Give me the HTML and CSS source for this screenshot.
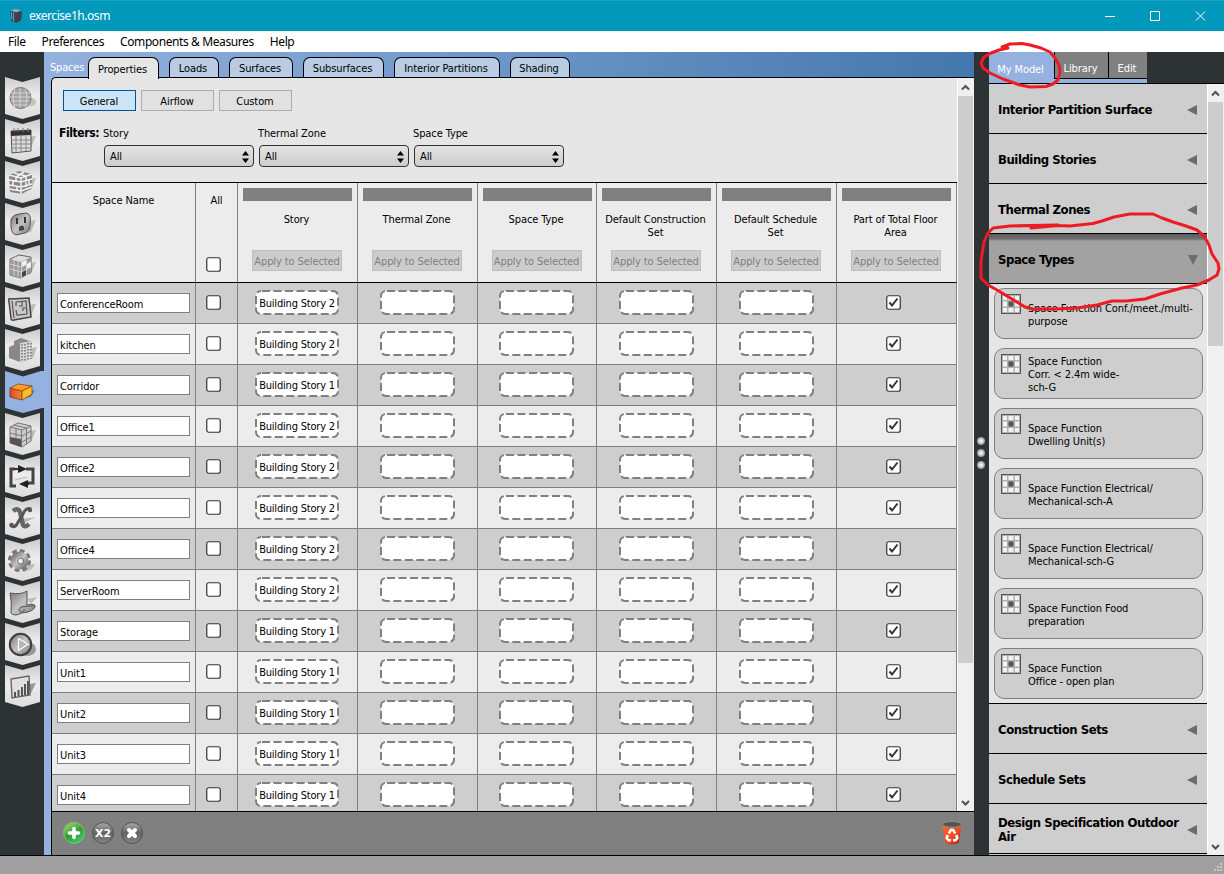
FILE: index.html
```html
<!DOCTYPE html>
<html lang="en">
<head>
<meta charset="utf-8">
<title>exercise1h.osm</title>
<link rel="stylesheet" href="styles.css">
</head>
<body>
<div class="window">
  <header class="titlebar">
    <svg class="app-icon" width="16" height="16" viewBox="0 0 16 16"><path d="M2 2.500 8 1 14 2.500 8 4.500z" fill="#8fa9bd"/><path d="M2 2.500 8 4.500V15L3 12.500z" fill="#2c4a63"/><path d="M14 2.500 8 4.500V15l5-2.500z" fill="#3d3f4c"/><path d="M3.500 4v7M5.500 5v8" stroke="#6d9cb8"/></svg>
    <span class="title">exercise1h.osm</span>
    <svg class="controls" width="110" height="20" viewBox="0 0 110 20" fill="none" stroke="#fff"><path d="M6 10.500h10M51.500 5.500h9v9h-9zM97 5.500l9 9M106 5.500l-9 9"/></svg>
  </header>
  <nav class="menubar"><span>File</span><span>Preferences</span><span>Components &amp; Measures</span><span>Help</span></nav>
  <div class="main">
    <aside class="sidebar" id="sidebar"></aside>
    <section class="workspace">
      <div class="tabs">
        <span class="tabs-label">Spaces</span>
        <span class="tab tab-on" style="width:71px">Properties</span>
        <span class="tab" style="width:50px">Loads</span>
        <span class="tab" style="width:64px">Surfaces</span>
        <span class="tab" style="width:81px">Subsurfaces</span>
        <span class="tab" style="width:106px">Interior Partitions</span>
        <span class="tab" style="width:60px">Shading</span>
      </div>
      <div class="panel">
        <div class="panel-body">
          <div class="content">
            <div class="filters">
              <div class="subtabs"><span class="subtab subtab-on">General</span><span class="subtab">Airflow</span><span class="subtab">Custom</span></div>
              <div class="filter-row">
                <b class="filter-title">Filters:</b>
                <div class="filter"><span>Story</span><div class="select">All<svg width="7" height="12" viewBox="0 0 7 12"><path d="M0 4.500 3.500 0 7 4.500zM0 7.500l3.500 4.500L7 7.500z"/></svg></div></div>
                <div class="filter"><span>Thermal Zone</span><div class="select">All<svg width="7" height="12" viewBox="0 0 7 12"><path d="M0 4.500 3.500 0 7 4.500zM0 7.500l3.500 4.500L7 7.500z"/></svg></div></div>
                <div class="filter"><span>Space Type</span><div class="select">All<svg width="7" height="12" viewBox="0 0 7 12"><path d="M0 4.500 3.500 0 7 4.500zM0 7.500l3.500 4.500L7 7.500z"/></svg></div></div>
              </div>
            </div>
            <div class="grid" id="grid"></div>
          </div>
          <div class="scrollbar">
            <svg class="arrow" width="17" height="17" viewBox="0 0 17 17"><path d="M5 10.500 8.500 7l3.500 3.500"/></svg>
            <div class="thumb" style="height:567px"></div>
            <svg class="arrow arrow-end" width="17" height="17" viewBox="0 0 17 17"><path d="M5 7l3.500 3.500L12 7"/></svg>
          </div>
        </div>
        <footer class="actions">
          <svg width="22" height="22" viewBox="0 0 22 22"><circle cx="11" cy="11" r="11" fill="url(#green)"/><circle cx="11" cy="11" r="10.300" fill="none" stroke="#75c37b"/><path d="M11 6.500v9M6.500 11h9" stroke="#fff" stroke-width="3.600" stroke-linecap="round"/></svg>
          <svg width="22" height="22" viewBox="0 0 22 22"><circle cx="11" cy="11" r="10.500" fill="url(#dark)" stroke="#505557"/><text x="11" y="15" class="x2" textLength="16" lengthAdjust="spacingAndGlyphs">X2</text></svg>
          <svg width="22" height="22" viewBox="0 0 22 22"><circle cx="11" cy="11" r="10.500" fill="url(#dark)" stroke="#505557"/><path d="M8 8l6 6M14 8l-6 6" stroke="#fff" stroke-width="4" stroke-linecap="round"/></svg>
          <svg class="trash" width="20" height="24" viewBox="0 0 20 24"><path d="M.5 3.500 3 21q1 2.500 7 2.500t7-2.500l2.500-17.500z" fill="url(#red)"/><ellipse cx="10" cy="3.400" rx="9.500" ry="2.900" fill="#555" stroke="#999" stroke-width=".8"/><path d="M6.800 12.500 8.800 9h2.400l2 3.500M14.300 14l1 3-1.800 2.300H11M5.700 14l-1 3 1.800 2.300H9" fill="none" stroke="#fff" stroke-width="2.500"/></svg>
        </footer>
      </div>
    </section>
    <div class="splitter"><i></i><i></i><i></i></div>
    <aside class="model">
      <div class="model-tabs"><span class="mtab mtab-on">My Model</span><span class="mtab mtab-lib">Library</span><span class="mtab mtab-edit">Edit</span></div>
      <div class="model-body">
        <div class="tree">
          <div class="group">Interior Partition Surface<i class="tri"></i></div>
          <div class="group">Building Stories<i class="tri"></i></div>
          <div class="group">Thermal Zones<i class="tri"></i></div>
          <div class="group group-open">Space Types<i class="tri-down"></i></div>
          <div class="cards" id="cards"></div>
          <div class="group">Construction Sets<i class="tri"></i></div>
          <div class="group">Schedule Sets<i class="tri"></i></div>
          <div class="group">Design Specification Outdoor<br>Air<i class="tri"></i></div>
          <div class="group"></div>
        </div>
        <div class="scrollbar">
          <svg class="arrow" width="17" height="17" viewBox="0 0 17 17"><path d="M5 10.500 8.500 7l3.500 3.500"/></svg>
          <div class="thumb" style="height:244px"></div>
          <svg class="arrow arrow-end" width="17" height="17" viewBox="0 0 17 17"><path d="M5 7l3.500 3.500L12 7"/></svg>
        </div>
      </div>
    </aside>
  </div>
  <footer class="status"><svg width="12" height="12" viewBox="0 0 12 12" fill="#c9c9c9"><path d="M8 1h2v2H8zM5 4h2v2H5zM8 4h2v2H8zM2 7h2v2H2zM5 7h2v2H5zM8 7h2v2H8z"/></svg></footer>
  <svg class="markup" width="1224" height="874" viewBox="0 0 1224 874">
    <path d="M1008 48 1002 47 1010 44 1022 43.500 1030 45 1041 48 1050 52 1055 58 1059 65 1060 72 1058 80 1053 84 1046 86.500 1030 87 1020 85 1003 79 990 73 983 68 981 63 984 57 991 53 999 50 1008 48"/>
    <path d="M1031 228 1058 225.500 1070 226 1093 223.500 1102 221 1114 217 1130 214 1153 214 1162 218 1173 222 1186 226 1197 230 1204 236 1209 245 1212 254 1218 263 1219 269 1217 275 1209 280 1197 285 1182 288 1160 294 1145 299 1126 301 1112 301 1097 305 1077 308 1056 309 1032 309 1025 307 1012 299 997 290 988 285 981 278 981 261 984 242 988 233 993 228 1010 226 1058 225"/>
  </svg>
  <svg class="defs" width="0" height="0">
    <defs>
      <linearGradient id="badge" x2="0" y2="1"><stop stop-color="#ccc"/><stop offset=".45" stop-color="#ededed"/><stop offset="1" stop-color="#dcdcdc"/></linearGradient>
      <linearGradient id="metal" x2="1" y2="1"><stop stop-color="#777"/><stop offset=".5" stop-color="#c4c4c4"/><stop offset="1" stop-color="#777"/></linearGradient>
      <linearGradient id="orange" x2="1"><stop stop-color="#e2471d"/><stop offset="1" stop-color="#f58a35"/></linearGradient>
      <linearGradient id="green" x1=".2" x2=".8" y2="1"><stop stop-color="#a9d36b"/><stop offset=".5" stop-color="#379b37"/><stop offset="1" stop-color="#3fcf70"/></linearGradient>
      <linearGradient id="dark" x2="0" y2="1"><stop stop-color="#aaa"/><stop offset=".5" stop-color="#646464"/><stop offset="1" stop-color="#848484"/></linearGradient>
      <linearGradient id="red" x2="1" y2="1"><stop stop-color="#ff6a25"/><stop offset=".6" stop-color="#ed4a24"/><stop offset="1" stop-color="#8f1c18"/></linearGradient>
    </defs>
  </svg>
</div>
<script src="script.js"></script>
</body>
</html>
```
FILE: styles.css
```css
* { box-sizing: border-box; }
body { margin: 0; overflow: hidden; background: #2d3235; color: #000; font: 11px/13px "DejaVu Sans Condensed", "DejaVu Sans", sans-serif; font-stretch: condensed; letter-spacing: -0.1px; }
.window { position: relative; width: 1224px; height: 874px; display: flex; flex-direction: column; }
.titlebar { height: 31px; flex: none; display: flex; align-items: center; background: #0099bc; border-top: 1px solid #1b9fc0; color: #fff; padding-left: 8px; font: 12px/16px "Noto Sans", sans-serif; letter-spacing: -0.45px; }
.title { margin-left: 5px; }
.controls { margin-left: auto; margin-right: 15px; }
.menubar { height: 21px; flex: none; display: flex; gap: 16px; padding-left: 8px; background: #fff; font: 12px/21px "Noto Sans", sans-serif; letter-spacing: -0.4px; }
.main { height: 803px; flex: none; display: flex; }
.sidebar { width: 44px; background: #2d3235; padding: 25px 0 0 5px; display: flex; flex-direction: column; }
.badge { display: block; flex: none; }
.workspace { width: 930px; background: #95b1df; display: flex; flex-direction: column; }
.tabs { height: 26px; flex: none; display: flex; gap: 10px; padding: 5px 0 0 6px; background: linear-gradient(90deg, #95b1df, #6f98c9 45%, #4477ad); }
.tabs-label { width: 38px; margin-right: -10px; color: #fff; line-height: 22px; letter-spacing: -0.2px; }
.tab { height: 20px; border: 1px solid #000; border-bottom: 0; border-radius: 7px 7px 0 0; background: #b9cce4; line-height: 21px; text-align: center; padding-right: 2px; }
.tab-on { background: #e6e6e6; height: 22px; line-height: 23px; position: relative; z-index: 1; }
.panel { flex: 1; margin: -1px 0 0 7px; border: 1px solid #000; border-right: 0; border-bottom: 0; border-radius: 5px 0 0 0; background: #e6e6e6; overflow: hidden; }
.panel-body { height: 733px; display: flex; }
.content { width: 905px; overflow: hidden; }
.filters { height: 104px; padding: 12px 0 0 11px; }
.subtabs { display: flex; gap: 5px; }
.subtab { width: 73px; height: 21px; border: 1px solid #adadad; background: #e1e1e1; line-height: 21px; text-align: center; padding-right: 1px; }
.subtab-on { border-color: #00549a; background: #cce4f7; }
.filter-row { display: flex; gap: 5px; margin: 16px 0 0 -4px; }
.filter-title { width: 40px; font-size: 12px; letter-spacing: -0.4px; }
.filter { width: 150px; }
.filter span { display: block; margin-left: -1px; }
.select { display: flex; justify-content: space-between; align-items: center; height: 22px; margin-top: 5px; padding: 1px 4px 0 5px; border: 1px solid #2d3235; border-radius: 4px; background: linear-gradient(#e4e4e4, #cdcdcd); }
.grid { border-top: 1px solid #000; }
.row { display: grid; grid-template-columns: 144px 42px 120px 120px 119px 120px 120px 120px; height: 41px; background: #ececec; }
.row:nth-child(even) { background: #cecece; }
.cell { border-right: 1px solid #808080; border-bottom: 1px solid #808080; display: flex; justify-content: center; align-items: center; }
.head { height: 100px; }
.head .cell { flex-direction: column; justify-content: flex-start; border-bottom-color: #000; text-align: center; }
.head .plain { padding-top: 11px; }
.head .plain .check { margin-top: 50px; }
.bar { width: 109px; height: 13px; margin: 5px 0 12px; background: #808080; }
.caption { height: 37px; padding-right: 2px; white-space: pre-line; }
.apply { width: 90px; height: 21px; margin-right: 1px; border: 1px solid #bfbfbf; background: #ccc; color: #808080; line-height: 21px; }
.field { width: 133px; height: 20px; border: 1px solid #808080; background: #fff; padding-left: 2px; line-height: 21px; }
.check { display: block; margin-right: 6px; margin-top: -2px; }
.zone { position: relative; width: 75px; height: 25px; margin-top: -1px; }
.cell:nth-child(5) .zone { margin-right: 1px; }
.zone svg { display: block; }
.zone-named { width: 84px; margin-right: 1px; }
.zone span { position: absolute; inset: 0; line-height: 27px; text-align: center; white-space: nowrap; letter-spacing: -0.2px; }
.scrollbar { width: 17px; flex: none; display: flex; flex-direction: column; background: #f0f0f0; border-left: 1px solid #fff; }
.thumb { width: 15px; background: #cdcdcd; }
.arrow { fill: none; stroke: #505050; stroke-width: 2; margin-left: -1px; flex: none; margin-top: 1px; }
.arrow-end { margin-top: auto; }
.actions { display: flex; gap: 7px; height: 44px; border-top: 1px solid #000; padding: 10px 12px 0 11px; background: #808080; }
.trash { margin-left: auto; margin-top: -1px; }
.x2 { font: bold 11px "DejaVu Sans", sans-serif; fill: #fff; text-anchor: middle; letter-spacing: 0; }
.splitter { width: 15px; background: #2d3235; display: flex; flex-direction: column; gap: 4px; padding: 385px 0 0 3px; }
.splitter i { width: 8px; height: 8px; border-radius: 50%; background: radial-gradient(#eee 20%, #8d9092 70%); }
.model { width: 235px; display: flex; flex-direction: column; }
.model-tabs { height: 32px; flex: none; display: flex; border-bottom: 1px solid #000; color: #fff; background: linear-gradient(#95b1df, #95b1df) 0 0 / 158px 31px no-repeat #2d3235; }
.mtab { height: 27px; background: #808080; border-left: 1px solid #000; border-bottom: 1px solid #000; line-height: 33px; text-align: center; padding-right: 2px; }
.mtab-on { width: 65px; height: 31px; border: 0; background: #95b1df; line-height: 35px; letter-spacing: -0.1px; }
.mtab-lib { width: 54px; }
.mtab-edit { width: 39px; }
.model-body { flex: 1; min-height: 0; display: flex; }
.tree { width: 218px; height: 771px; overflow: hidden; background: #cecece; }
.group { position: relative; height: 50px; border-bottom: 1px solid #000; padding: 2px 9px 0; display: flex; align-items: center; justify-content: space-between; font-size: 13px; line-height: 14px; font-weight: bold; letter-spacing: -0.45px; }
.group-open { background: linear-gradient(#5c5c5c, #6f6f6f 5px, #a2a2a2 7px); }
.tri { border: 5px solid transparent; border-left: 0; border-right: 10px solid #6c6c6c; margin-right: 1px; flex: none; }
.tri-down { border: 5px solid transparent; border-bottom: 0; border-top: 10px solid #6c6c6c; }
.cards { height: 420px; border-bottom: 1px solid #000; background: #e6e6e6; padding: 4px 0 0 5px; display: flex; flex-direction: column; gap: 9px; }
.card { width: 209px; height: 51px; flex: none; border: 1px solid #808080; border-radius: 10px; background: #cecece; display: flex; padding: 5px 0 0 6px; gap: 7px; }
.card p { height: 39px; margin: 1px 0 0; display: flex; align-items: center; white-space: pre-line; }
.card svg { flex: none; }
.status { height: 19px; flex: none; background: #a0a0a0; border-top: 1px solid #000; display: flex; justify-content: flex-end; align-items: flex-end; }
.markup { position: absolute; left: 0; top: 0; fill: none; stroke: #ed1c24; stroke-width: 3; stroke-linejoin: round; stroke-linecap: round; pointer-events: none; }
.defs { position: absolute; }
```
FILE: script.js
```js
const spaces = [
  ["ConferenceRoom", 2], ["kitchen", 2], ["Corridor", 1], ["Office1", 2], ["Office2", 2],
  ["Office3", 2], ["Office4", 2], ["ServerRoom", 2], ["Storage", 1], ["Unit1", 1],
  ["Unit2", 1], ["Unit3", 1], ["Unit4", 1]
];
const columns = ["Story", "Thermal Zone", "Space Type", "Default Construction\nSet", "Default Schedule\nSet", "Part of Total Floor\nArea"];

const check = on => `<svg class="check" width="15" height="15" viewBox="0 0 15 15"><rect x=".75" y=".75" width="13.500" height="13.500" rx="2" fill="#fff" stroke="#333" stroke-width="1.200"/>${on ? '<path d="M3.500 7.500 6 10.500l5.500-7" fill="none" stroke="#333" stroke-width="2"/>' : ""}</svg>`;
const zone = (w, text) => `<div class="zone${text ? " zone-named" : ""}"><svg width="${w}" height="25" viewBox="0 0 ${w} 25"><rect x="1" y="1" width="${w - 2}" height="23" rx="5" fill="#fff" stroke="#808080" stroke-width="2" stroke-dasharray="8 3.500" stroke-dashoffset="-1"/></svg><span>${text}</span></div>`;
const cell = html => `<div class="cell">${html}</div>`;

const head = `<div class="row head"><div class="cell plain">Space Name</div><div class="cell plain">All${check(false)}</div>` +
  columns.map(c => cell(`<div class="bar"></div><div class="caption">${c}</div><div class="apply">Apply to Selected</div>`)).join("") + "</div>";
document.getElementById("grid").innerHTML = head + spaces.map(([name, story]) =>
  `<div class="row">${cell(`<div class="field">${name}</div>`)}${cell(check(false))}${cell(zone(84, "Building Story " + story))}${cell(zone(75, "")).repeat(4)}${cell(check(true))}</div>`).join("");

const types = ["Space Function Conf./meet./multi-\npurpose", "Space Function\nCorr. < 2.4m wide-\nsch-G", "Space Function\nDwelling Unit(s)", "Space Function Electrical/\nMechanical-sch-A", "Space Function Electrical/\nMechanical-sch-G", "Space Function Food\npreparation", "Space Function\nOffice - open plan"];
document.getElementById("cards").innerHTML = types.map(t =>
  `<div class="card"><svg width="20" height="20" viewBox="0 0 20 20"><rect x=".5" y=".5" width="19" height="19" fill="#b0b0b0" stroke="#555"/><path fill="#f2f2f2" d="M2 2h4v4H2zM7.500 2h5v4h-5zM14 2h4v4h-4zM2 7.500h4v5H2zM14 7.500h4v5h-4zM2 14h4v4H2zM7.500 14h5v4h-5zM14 14h4v4h-4z"/><path fill="#555" d="M7.500 7.500h5v5h-5z"/></svg><p>${t.replace("<", "&lt;")}</p></div>`).join("");

const shadow = '<path d="M24 18l7-1-5 12-8 2z" fill="#bdbdb2"/>';
const icons = [
  // site globe
  '<ellipse cx="24" cy="25" rx="7" ry="4.500" fill="#c3c3b8"/><circle cx="15.500" cy="21" r="10.500" fill="#a4a4a4" stroke="#777"/><path d="M6 16h19M5 20h21M6 24h19M8 28h15M15 11v20M10 12q-4 9 0 18M20 12q4 9 0 18" stroke="#ddd" fill="none" stroke-width=".8"/>',
  // schedule calendar
  shadow + '<path d="M6 12l20-1v21l-19 2z" fill="#ddd" stroke="#555"/><path d="M6 12l20-1v5l-20 1z" fill="#333"/><path d="M7 21h19M7 25h19M7 29h19M11 17v16M16 17v16M21 17v15" stroke="#888"/><path d="M9 9v4M13 9v4M18 9v4M23 9v4" stroke="#777"/>',
  // construction bricks
  shadow + '<path d="M4 14l10-4 13 3v14l-10 6-12-2z" fill="#888"/><path d="M4 14l12 3 11-4M4 19l12 2 11-3M4 24l12 2 11-3M5 28l11 2 11-4M16 17v16M9 12l12 3M19 11l-8 5M21 15v4M24 19v4M21 21v5M11 16v4M8 20v4M12 25v4" stroke="#f3f3f3" stroke-width="1.500" fill="none"/>',
  // load outlet
  shadow + '<path d="M6 17q1-5 8-6l7-1q6 1 4 12 0 6-5 8l-9 2q-6-1-5-15z" fill="url(#metal)" stroke="#555"/><path d="M12 15v6M20 14v6" stroke="#333" stroke-width="2"/><path d="M14 28v-4q3-3 5 0v3z" fill="#444"/>',
  // space types
  shadow + '<path d="M5 14l9-4 12 2v15l-10 6-11-3z" fill="#ddd" stroke="#666"/><path d="M5 14l11 3 10-5v15l-10 6-11-3z" fill="#999"/><path d="M17 17l4-2v5l-4 2zM22 19l4-2v5l-4 2z" fill="#f2f2f2"/><path d="M17 27l4-2v5l-4 2z" fill="#444"/><path d="M5 19l11 3 10-5M5 24l11 3 10-5M9 15v16M13 16v16M16.500 17v16M21.500 15v15M10 12l11 3" stroke="#ddd" stroke-width=".8" fill="none"/>',
  // geometry plan
  shadow + '<path d="M6 12q-3-2-2 3l2 16q0 3 3 2l17-3-2-19z" fill="#c9c9c9" stroke="#444" stroke-width="1.500"/><path d="M7 14l2 17M11 15l10-1 1 13-10 1-1-5M11 19v-4M17 14v5h-3M22 21h-4v3" fill="none" stroke="#555" stroke-width="1.200"/>',
  // facility building
  '<path d="M21 20l11-2-4 11-8 3z" fill="#bdbdb2"/><path d="M4 18l5-2v-4l7-3 11 4v15l-12 5-11-4z" fill="#888"/><path d="M15 14l12-2v18l-12 4z" fill="#d6d6d6"/><path d="M17 15v18M20 15v17M23 14v17M26 14v16" stroke="#666" stroke-width="1.400" stroke-dasharray="1.500 1.500"/>',
  // spaces
  '<path d="M20 20l10-1-4 7-9 2z" fill="#6d84a6"/><path d="M5 17l12 3v9L5 26z" fill="url(#orange)" stroke="#7e3a20" stroke-width=".8"/><path d="M5 17l8-4 14 2-10 5z" fill="#ff9d25" stroke="#80451e" stroke-width=".8"/><path d="M17 20l10-5v8l-10 6z" fill="#ffbe19" stroke="#80451e" stroke-width=".8"/>',
  // thermal zones
  shadow + '<path d="M5 14l8-4 13 3v15l-9 6-12-4z" fill="#ccc" stroke="#777"/><path d="M5 24l11 2v8l-11-4z" fill="#555"/><path d="M5 14l12 3 9-4M5 20l12 3 9-5M16.500 17v17M11 16v10M21.500 15v16M9 12l12 3M17 29l9-5" stroke="#777" fill="none"/>',
  // HVAC loop
  '<path d="M10 14H6v17h5M21 14h7v14h-5" fill="none" stroke="#444" stroke-width="3"/><path d="M9 14h7M18 29h6" stroke="#333" stroke-width="2"/><path d="M13 10l9 4-9 4zM23 25l-9 4 9 4z" fill="#222"/><path d="M10 25l12-3" stroke="#bbb" fill="none"/>',
  // output variables
  '<path d="M17 22l14-2-12 6" fill="#bdbdb2"/><path d="M8 14q5-4 7 1l3 13q2 3 6-1" fill="none" stroke="#666" stroke-width="4.500"/><path d="M26 12q-5-2-8 5l-6 10q-2 4-6 2" fill="none" stroke="#555" stroke-width="3"/><circle cx="25" cy="13" r="2.200" fill="#555"/><circle cx="6.500" cy="28" r="2.300" fill="#555"/>',
  // simulation settings gear
  '<path d="M18 26l12-1-3 5-8 3z" fill="#bdbdb2"/><circle cx="14.500" cy="21.500" r="9.800" fill="none" stroke="#777" stroke-width="3.500" stroke-dasharray="4.700 3"/><circle cx="14.500" cy="21.500" r="6" fill="#eee" stroke="url(#metal)" stroke-width="6"/><circle cx="15.500" cy="22" r="3" fill="#eee" stroke="#666"/>',
  // measures scroll
  '<path d="M22 18l10-2-6 7z" fill="#bdbdb2"/><path d="M5 12q11 2 17-2v14q9-2 8 2-2 5-13 6-8 4-11 0 1-10-1-20z" fill="url(#metal)" stroke="#555"/><path d="M30 25q-9 0-14 1-4 3 0 5 4 0 3-3" fill="#aaa" stroke="#555"/>',
  // run simulation
  '<ellipse cx="22" cy="26" rx="9" ry="7" fill="#999"/><circle cx="15.500" cy="21.500" r="10.700" fill="url(#metal)" stroke="#3f3f3f" stroke-width="2"/><path d="M13.500 15.500v12l9.500-6.300z" fill="#b5b5b5" stroke="#fff" stroke-width="1.200"/>',
  // results chart
  '<path d="M24 19l7-1-6 12z" fill="#999"/><path d="M6 14l18-3 1 19-18 3z" fill="#e0e0e0" stroke="#666" stroke-width="1.400"/><path d="M10 32v-5M13.500 31v-6M17 31v-9M20 30V19M23 30V16" stroke="#555" stroke-width="2"/>'
];
document.getElementById("sidebar").innerHTML = icons.map((art, i) => i === 7
  ? `<svg class="badge" width="39" height="42" viewBox="0 0 39 42"><path d="M0 0 18 5.500 36 0h3v37h-2L18 42 0 37z" fill="#95b1df"/>${art}</svg>`
  : `<svg class="badge" width="39" height="42" viewBox="0 0 39 42"><path d="M0 0 17.500 5 35 0v37l-17.500 5L0 37z" fill="url(#badge)"/>${art}</svg>`).join("");
```
